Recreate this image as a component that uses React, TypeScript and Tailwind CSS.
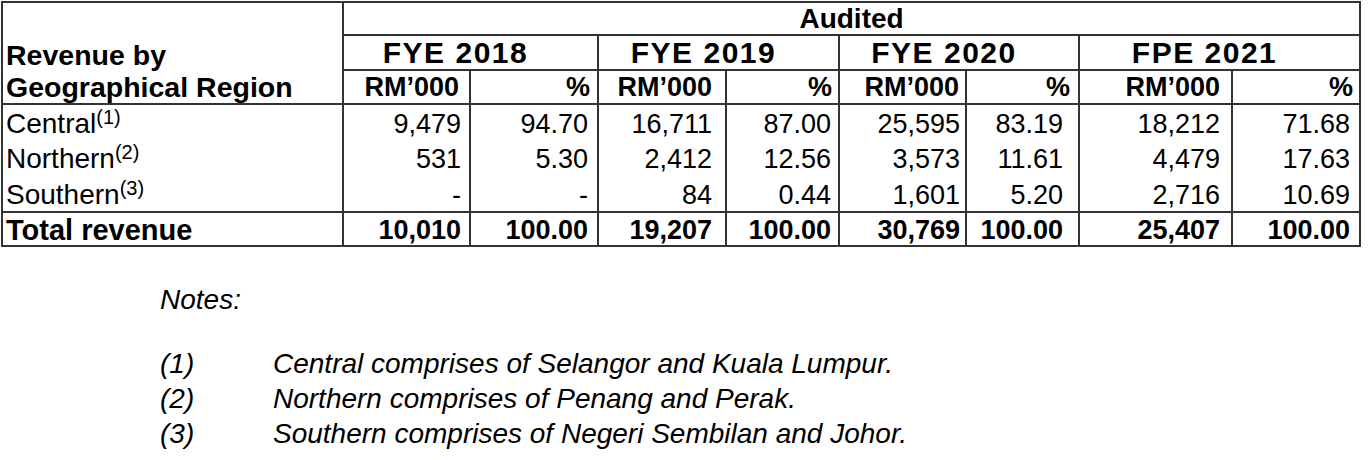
const font = "font-['Liberation_Sans',Arial,sans-serif]";

type Row = {
  label: string;
  note?: string;
  values: string[];
  total?: boolean;
};

const rows: Row[] = [
  { label: 'Central', note: '(1)', values: ['9,479', '94.70', '16,711', '87.00', '25,595', '83.19', '18,212', '71.68'] },
  { label: 'Northern', note: '(2)', values: ['531', '5.30', '2,412', '12.56', '3,573', '11.61', '4,479', '17.63'] },
  { label: 'Southern', note: '(3)', values: ['-', '-', '84', '0.44', '1,601', '5.20', '2,716', '10.69'] },
  { label: 'Total revenue', values: ['10,010', '100.00', '19,207', '100.00', '30,769', '100.00', '25,407', '100.00'], total: true },
];

// right padding per data column, measured off the reference
const dataPad = ['pr-[8px]', 'pr-[9px]', 'pr-[13px]', 'pr-[7px]', 'pr-[5px]', 'pr-[15px]', 'pr-[11px]', 'pr-[9px]'];
const headPad = ['pr-[10px]', 'pr-[7px]', 'pr-[13px]', 'pr-[6px]', 'pr-[6px]', 'pr-[8px]', 'pr-[11px]', 'pr-[6px]'];

const periods = ['FYE 2018', 'FYE 2019', 'FYE 2020', 'FPE 2021'];

const notes = [
  ['(1)', 'Central comprises of Selangor and Kuala Lumpur.'],
  ['(2)', 'Northern comprises of Penang and Perak.'],
  ['(3)', 'Southern comprises of Negeri Sembilan and Johor.'],
];

export default function App() {
  const line = 'border-2 border-[#333]';

  return (
    <div className={`w-[1368px] h-[460px] bg-white text-black ${font}`}>
      <table className="table-fixed border-collapse ml-[1px] mt-[1px] w-[1360px]">
        <colgroup>
          <col className="w-[341px]" />
          <col className="w-[127px]" />
          <col className="w-[128px]" />
          <col className="w-[128px]" />
          <col className="w-[113px]" />
          <col className="w-[127px]" />
          <col className="w-[113px]" />
          <col className="w-[153px]" />
          <col className="w-[128px]" />
        </colgroup>
        <thead>
          <tr className="h-[33px]">
            <td rowSpan={3} className={`${line} align-bottom pl-[3px] text-[28.5px] font-bold leading-[32px]`}>
              Revenue by
              <br />
              Geographical Region
            </td>
            <td colSpan={8} className={`${line} text-center text-[28px] font-bold leading-[30px]`}>
              Audited
            </td>
          </tr>
          <tr className="h-[35px]">
            {periods.map((p) => (
              <td key={p} colSpan={2} className={`${line} text-center pr-[30px] text-[30px] font-bold leading-[30px] tracking-[1.5px]`}>
                {p}
              </td>
            ))}
          </tr>
          <tr className="h-[34px]">
            {headPad.map((pad, i) => (
              <td key={i} className={`${line} text-right ${pad} text-[27px] font-bold leading-[30px]`}>
                {i % 2 === 0 ? 'RM\u2019000' : '%'}
              </td>
            ))}
          </tr>
        </thead>
        <tbody>
          {rows.map((r, ri) => (
            <tr key={r.label} className={r.total ? 'h-[34px]' : 'h-[36px]'}>
              <td
                className={`border-x-2 border-[#333] pl-[3px] pt-[2px] leading-[30px] ${
                  r.total ? 'border-y-2 font-bold text-[29px]' : 'text-[28px]'
                } ${ri === 2 ? 'border-b-2' : ''}`}
              >
                {r.label}
                {r.note && <sup className="text-[20px] top-[-0.45em]">{r.note}</sup>}
              </td>
              {r.values.map((v, i) => (
                <td
                  key={i}
                  className={`border-x-2 border-[#333] text-right ${dataPad[i]} pt-[2px] text-[27px] leading-[30px] ${
                    r.total ? 'border-y-2 font-bold' : ''
                  }`}
                >
                  {v}
                </td>
              ))}
            </tr>
          ))}
        </tbody>
      </table>

      <div className="pl-[160px] mt-[35px] italic text-[28px] leading-[35px]">
        <p>Notes:</p>
        <div className="mt-[29px]">
          {notes.map(([n, t]) => (
            <div key={n} className="flex">
              <span className="w-[113px] shrink-0">{n}</span>
              <span>{t}</span>
            </div>
          ))}
        </div>
      </div>
    </div>
  );
}
